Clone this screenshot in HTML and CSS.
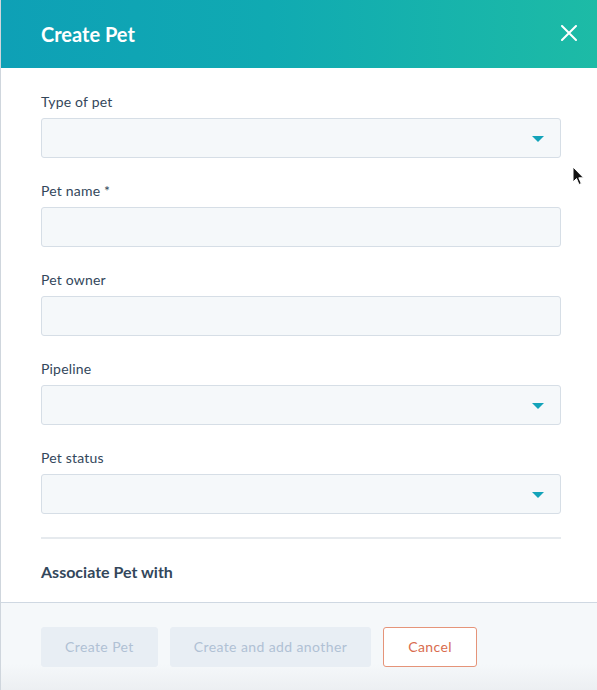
FILE: index.html
```html
<!DOCTYPE html>
<html lang="en">
<head>
<meta charset="utf-8">
<title>Create Pet</title>
<link rel="stylesheet" href="styles.css">
</head>
<body>
<div class="modal">
  <header class="modal-header">
    <h1 class="modal-title">Create Pet</h1>
    <button class="close" type="button" aria-label="Close">
      <svg width="16" height="16" viewBox="0 0 16 16"><path d="M1 1L15 15M15 1L1 15" stroke="#fff" stroke-width="2" stroke-linecap="round" fill="none"/></svg>
    </button>
  </header>
  <div class="modal-body">
    <div class="fields">
      <div class="field">
        <label class="label">Type of pet</label>
        <div class="input select"><span class="caret"></span></div>
      </div>
      <div class="field">
        <label class="label">Pet name *</label>
        <div class="input"></div>
      </div>
      <div class="field">
        <label class="label">Pet owner</label>
        <div class="input"></div>
      </div>
      <div class="field">
        <label class="label">Pipeline</label>
        <div class="input select"><span class="caret"></span></div>
      </div>
      <div class="field">
        <label class="label">Pet status</label>
        <div class="input select"><span class="caret"></span></div>
      </div>
    </div>
    <div class="divider"></div>
    <h2 class="section-title">Associate Pet with</h2>
  </div>
  <footer class="modal-footer">
    <button class="btn btn-disabled" type="button">Create Pet</button>
    <button class="btn btn-disabled" type="button">Create and add another</button>
    <button class="btn btn-cancel" type="button">Cancel</button>
  </footer>
</div>
<svg class="cursor" width="13" height="20" viewBox="0 0 13 20"><path d="M1 1L1 16L4.5 12.5L7 18.5L9.3 17.5L6.8 11.8L11.5 11.8Z" fill="#111" stroke="#fff" stroke-width="1"/></svg>
</body>
</html>
```

FILE: styles.css
```css
* { box-sizing: border-box; }

html, body {
  margin: 0;
  padding: 0;
}

body {
  width: 597px;
  height: 690px;
  overflow: hidden;
  background: #cfd6dd;
  font-family: Lato, "Open Sans", "Liberation Sans", sans-serif;
  color: #33475b;
  position: relative;
}

.modal {
  margin-left: 1px;
  height: 690px;
  display: flex;
  flex-direction: column;
  background: #fff;
}

.modal-header {
  height: 68px;
  flex: none;
  display: flex;
  align-items: center;
  justify-content: space-between;
  padding: 0 20px 0 40px;
  background: linear-gradient(90deg, #0ea0b6 0%, #10aab2 45%, #1dbba6 100%);
}

.modal-title {
  margin: 0;
  font-size: 20px;
  font-weight: 700;
  line-height: 28px;
  color: #fff;
}

.close {
  border: 0;
  background: none;
  padding: 0;
  width: 16px;
  height: 16px;
  display: flex;
  margin-top: -2px;
}

.modal-body {
  height: 534px;
  flex: none;
  padding: 24px 36px 0 40px;
  overflow: hidden;
}

.fields {
  display: flex;
  flex-direction: column;
  gap: 23px;
}

.label {
  display: block;
  font-size: 14px;
  line-height: 20px;
  letter-spacing: 0.2px;
  margin-bottom: 6px;
  color: #33475b;
}

.input {
  height: 40px;
  background: #f5f8fa;
  border: 1px solid #d6dee6;
  border-radius: 3px;
  display: flex;
  align-items: center;
  justify-content: flex-end;
  padding-right: 16px;
}

.caret {
  width: 0;
  height: 0;
  border-left: 6px solid transparent;
  border-right: 6px solid transparent;
  border-top: 6px solid #13a3b9;
  margin-top: 1px;
}

.divider {
  height: 2px;
  background: #e6eaee;
  margin-top: 23px;
}

.section-title {
  margin: 21px 0 0;
  font-size: 16px;
  line-height: 24px;
  font-weight: 700;
  color: #33475b;
}

.modal-footer {
  flex: 1;
  border-top: 1px solid #cfd8e2;
  background: linear-gradient(180deg, #f5f8fa 0%, #f5f8fa 70%, #eceff2 100%);
  padding: 24px 0 0 40px;
  display: flex;
  align-items: flex-start;
  gap: 12px;
}

.btn {
  height: 40px;
  padding: 0 23px;
  border-radius: 3px;
  font-family: inherit;
  font-size: 14px;
  letter-spacing: 0.4px;
  line-height: 38px;
  cursor: pointer;
}

.btn-disabled {
  background: #e8eef4;
  border: 1px solid #e8eef4;
  color: #b0c1d4;
}

.btn-cancel {
  background: #fff;
  border: 1px solid #e59479;
  color: #d96c4e;
  padding: 0 24px;
}

.cursor {
  position: absolute;
  left: 572px;
  top: 166px;
}
```
